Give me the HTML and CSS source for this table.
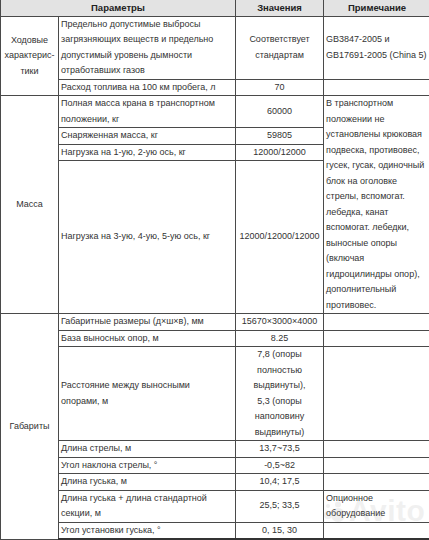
FILE: index.html
```html
<!DOCTYPE html>
<html lang="ru">
<head>
<meta charset="utf-8">
<title>Характеристики</title>
<link rel="stylesheet" href="styles.css">
</head>
<body>
<div class="sheet">
<table class="spec">
  <colgroup>
    <col class="c1"><col class="c2"><col class="c3"><col class="c4">
  </colgroup>
  <thead>
    <tr class="head">
      <th colspan="2">Параметры</th>
      <th>Значения</th>
      <th>Примечание</th>
    </tr>
  </thead>
  <tbody>
    <tr>
      <td class="group" rowspan="2">Ходовые<br>характерис-<br>тики</td>
      <td class="param">Предельно допустимые выбросы<br>загрязняющих веществ и предельно<br>допустимый уровень дымности<br>отработавших газов</td>
      <td class="val">Соответствует<br>стандартам</td>
      <td class="note">GB3847-2005 и<br>GB17691-2005 (China 5)</td>
    </tr>
    <tr class="one">
      <td class="param">Расход топлива на 100 км пробега, л</td>
      <td class="val">70</td>
      <td class="note"></td>
    </tr>
    <tr class="two">
      <td class="group" rowspan="4">Масса</td>
      <td class="param">Полная масса крана в транспортном<br>положении, кг</td>
      <td class="val">60000</td>
      <td class="note" rowspan="4">В транспортном<br>положении не<br>установлены крюковая<br>подвеска, противовес,<br>гусек, гусак, одиночный<br>блок на оголовке<br>стрелы, вспомогат.<br>лебедка, канат<br>вспомогат. лебедки,<br>выносные опоры<br>(включая<br>гидроцилиндры опор),<br>дополнительный<br>противовес.</td>
    </tr>
    <tr class="one">
      <td class="param">Снаряженная масса, кг</td>
      <td class="val">59805</td>
    </tr>
    <tr class="one">
      <td class="param">Нагрузка на 1-ую, 2-ую ось, кг</td>
      <td class="val">12000/12000</td>
    </tr>
    <tr>
      <td class="param">Нагрузка на 3-ую, 4-ую, 5-ую ось, кг</td>
      <td class="val">12000/12000/12000</td>
    </tr>
    <tr class="one">
      <td class="group" rowspan="8">Габариты</td>
      <td class="param">Габаритные размеры (д×ш×в), мм</td>
      <td class="val">15670×3000×4000</td>
      <td class="note"></td>
    </tr>
    <tr class="one">
      <td class="param">База выносных опор, м</td>
      <td class="val">8.25</td>
      <td class="note"></td>
    </tr>
    <tr>
      <td class="param">Расстояние между выносными<br>опорами, м</td>
      <td class="val">7,8 (опоры<br>полностью<br>выдвинуты),<br>5,3 (опоры<br>наполовину<br>выдвинуты)</td>
      <td class="note"></td>
    </tr>
    <tr class="one">
      <td class="param">Длина стрелы, м</td>
      <td class="val">13,7~73,5</td>
      <td class="note"></td>
    </tr>
    <tr class="one">
      <td class="param">Угол наклона стрелы, °</td>
      <td class="val">-0,5~82</td>
      <td class="note"></td>
    </tr>
    <tr class="one">
      <td class="param">Длина гуська, м</td>
      <td class="val">10,4; 17,5</td>
      <td class="note"></td>
    </tr>
    <tr class="two">
      <td class="param">Длина гуська + длина стандартной<br>секции, м</td>
      <td class="val">25,5; 33,5</td>
      <td class="note">Опционное<br>оборудование</td>
    </tr>
    <tr class="one last">
      <td class="param">Угол установки гуська, °</td>
      <td class="val">0, 15, 30</td>
      <td class="note"></td>
    </tr>
  </tbody>
</table>
<div class="watermark" aria-hidden="true">
  <svg class="wm-logo" width="24" height="24" viewBox="0 0 24 24">
    <circle cx="16" cy="16" r="7"/>
    <circle cx="6" cy="16" r="4"/>
    <circle cx="16" cy="5.5" r="3"/>
    <circle cx="6" cy="7" r="2"/>
  </svg>
  <span class="wm-text">Avito</span>
</div>
</div>
</body>
</html>
```
FILE: styles.css
```css
html, body {
  margin: 0;
  padding: 0;
  background: #ffffff;
}
body {
  width: 429px;
  height: 540px;
  overflow: hidden;
  font-family: "Liberation Sans", Arial, sans-serif;
  color: #333;
}
.sheet {
  position: relative;
  width: 429px;
  height: 540px;
}
.spec {
  width: 430px;
  table-layout: fixed;
  border-collapse: collapse;
  font-size: 9px;
  line-height: 15.5px;
}
.c1 { width: 58px; }
.c2 { width: 177px; }
.c3 { width: 88px; }
.c4 { width: 107px; }
.spec th,
.spec td {
  border: 1px solid #4a4a4a;
  padding: 0 2px;
  vertical-align: middle;
  white-space: nowrap;
}
.one { height: 16px; }
.two { height: 32px; }
.head th {
  background: #e3e3e3;
  color: #222;
  font-size: 9.5px;
  font-weight: bold;
  text-align: center;
  height: 15px;
  border-top: none;
}
.group {
  text-align: center;
}
.param {
  text-align: left;
  padding-left: 3px;
}
.val {
  text-align: center;
}
.note {
  text-align: left;
  padding-left: 2px;
}
.last td {
  border-bottom: 2px solid #333;
}
.watermark {
  position: absolute;
  left: 322px;
  top: 494px;
  display: flex;
  align-items: center;
  gap: 3px;
  opacity: 0.1;
  pointer-events: none;
}
.wm-logo circle {
  fill: #777;
}
.wm-text {
  font-family: "Liberation Sans", Arial, sans-serif;
  font-weight: bold;
  font-size: 30px;
  color: #777;
  letter-spacing: 0.5px;
}
```
